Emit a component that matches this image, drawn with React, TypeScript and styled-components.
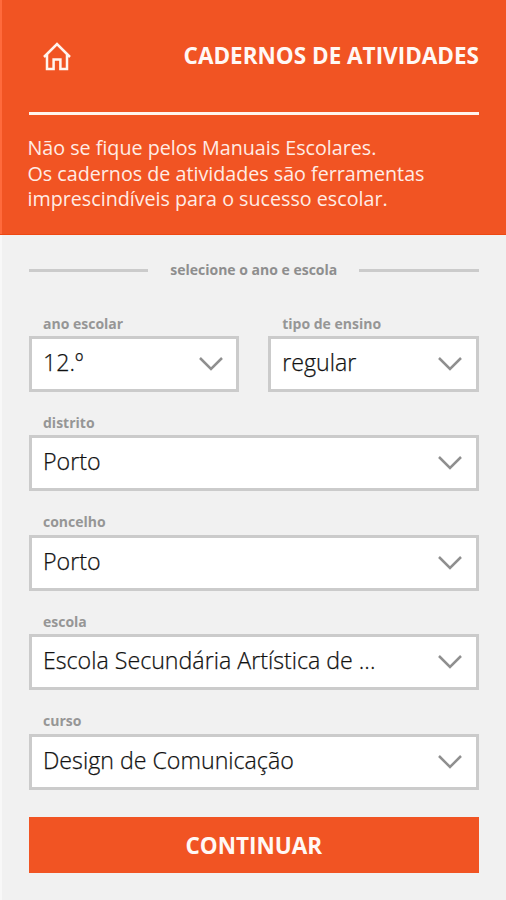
import React from "react";
import styled, { createGlobalStyle } from "styled-components";

const GlobalStyle = createGlobalStyle`
  * { box-sizing: border-box; }
  body { margin: 0; font-family: "Open Sans", "Noto Sans", sans-serif; }
  button { font-family: inherit; }
`;

const Screen = styled.div`
  width: 506px;
  height: 900px;
  overflow: hidden;
  background: #f1f1f1;
  box-shadow: inset 2px 0 0 #f8f8f8;
`;

const Header = styled.header`
  height: 235px;
  padding: 0 27px 0 29px;
  background: #f15423;
  border-bottom: 1px solid #ee4812;
  box-shadow: inset 2px 0 0 #ff6a3c;
`;

const TitleBar = styled.div`
  height: 114.5px;
  padding: 0 0 3px 14px;
  border-bottom: 3px solid #fff4ee;
  display: flex;
  align-items: center;
  justify-content: space-between;
`;

const HomeButton = styled.button`
  display: block;
  padding: 0;
  border: 0;
  background: none;
  color: #fff4ee;
  height: 29px;
  margin-top: 4px;
`;

const Title = styled.h1`
  margin: 3px 0 0;
  color: #fff8f5;
  font-size: 22.5px;
  line-height: 30px;
  font-weight: 700;
  white-space: nowrap;
`;

const Intro = styled.p`
  margin: 20.5px 0 0 -1.5px;
  color: #ffece5;
  font-size: 19.7px;
  line-height: 25.5px;
  white-space: nowrap;
`;

const Form = styled.main`
  padding: 23px 27.5px 0 29px;
`;

const Divider = styled.div`
  display: flex;
  align-items: center;
  gap: 22px;
  height: 25px;
  color: #8e8e8e;
  font-size: 14px;
  font-weight: 700;
  white-space: nowrap;

  &::before,
  &::after {
    content: "";
    flex: 1;
    height: 3px;
    background: #cbcbcb;
  }
`;

const DividerText = styled.span`
  margin-bottom: 2px;
`;

const Fields = styled.div`
  display: grid;
  grid-template-columns: 1fr 1fr;
  column-gap: 29px;
  row-gap: 20.9px;
  margin-top: 30.6px;
`;

const FieldRoot = styled.div<{ $wide?: boolean }>`
  grid-column: ${(p) => (p.$wide ? "1 / -1" : "auto")};
  min-width: 0;
`;

const Label = styled.div`
  padding-left: 14px;
  height: 22.5px;
  line-height: 20px;
  font-size: 14px;
  font-weight: 700;
  color: #969696;
  white-space: nowrap;
`;

const SelectBox = styled.div`
  height: 56px;
  border: 3px solid #cbcbcb;
  background: #fff;
  padding: 0 13.5px 0 11px;
  display: flex;
  align-items: center;
  justify-content: space-between;
`;

const Value = styled.span`
  color: #111;
  font-size: 23.2px;
  font-weight: 300;
  -webkit-text-stroke: 0.25px #111;
  line-height: 30px;
  margin-bottom: 4px;
  white-space: nowrap;
`;

const ContinueButton = styled.button`
  display: block;
  width: 100%;
  height: 56px;
  margin-top: 27px;
  padding: 1px 0 0;
  border: 0;
  background: #f15423;
  color: #fff8f5;
  font-size: 22.5px;
  font-weight: 700;
`;

const HomeIcon = () => (
  <svg width="28" height="29" viewBox="0 0 28 29" fill="none" stroke="currentColor" strokeWidth="2.5">
    <path d="M1 15 14 2l13 13" />
    <path d="M4 12.5v14.6h6.6V17.6h6.8v9.5H24V12.5" />
  </svg>
);

const Chevron = () => (
  <svg width="24" height="14" viewBox="0 0 24 14" fill="none" stroke="#8f8f8f" strokeWidth="2.5">
    <path d="m1 1 11 11L23 1" />
  </svg>
);

interface FieldProps {
  label: string;
  value: string;
  wide?: boolean;
}

const Field = ({ label, value, wide }: FieldProps) => (
  <FieldRoot $wide={wide}>
    <Label>{label}</Label>
    <SelectBox>
      <Value>{value}</Value>
      <Chevron />
    </SelectBox>
  </FieldRoot>
);

const fields: FieldProps[] = [
  { label: "ano escolar", value: "12.º" },
  { label: "tipo de ensino", value: "regular" },
  { label: "distrito", value: "Porto", wide: true },
  { label: "concelho", value: "Porto", wide: true },
  { label: "escola", value: "Escola Secundária Artística de ...", wide: true },
  { label: "curso", value: "Design de Comunicação", wide: true },
];

export default function App() {
  return (
    <>
      <GlobalStyle />
      <Screen>
        <Header>
          <TitleBar>
            <HomeButton aria-label="Início">
              <HomeIcon />
            </HomeButton>
            <Title>CADERNOS DE ATIVIDADES</Title>
          </TitleBar>
          <Intro>
            Não se fique pelos Manuais Escolares.
            <br />
            Os cadernos de atividades são ferramentas
            <br />
            imprescindíveis para o sucesso escolar.
          </Intro>
        </Header>
        <Form>
          <Divider>
            <DividerText>selecione o ano e escola</DividerText>
          </Divider>
          <Fields>
            {fields.map((f) => (
              <Field key={f.label} {...f} />
            ))}
          </Fields>
          <ContinueButton>CONTINUAR</ContinueButton>
        </Form>
      </Screen>
    </>
  );
}
